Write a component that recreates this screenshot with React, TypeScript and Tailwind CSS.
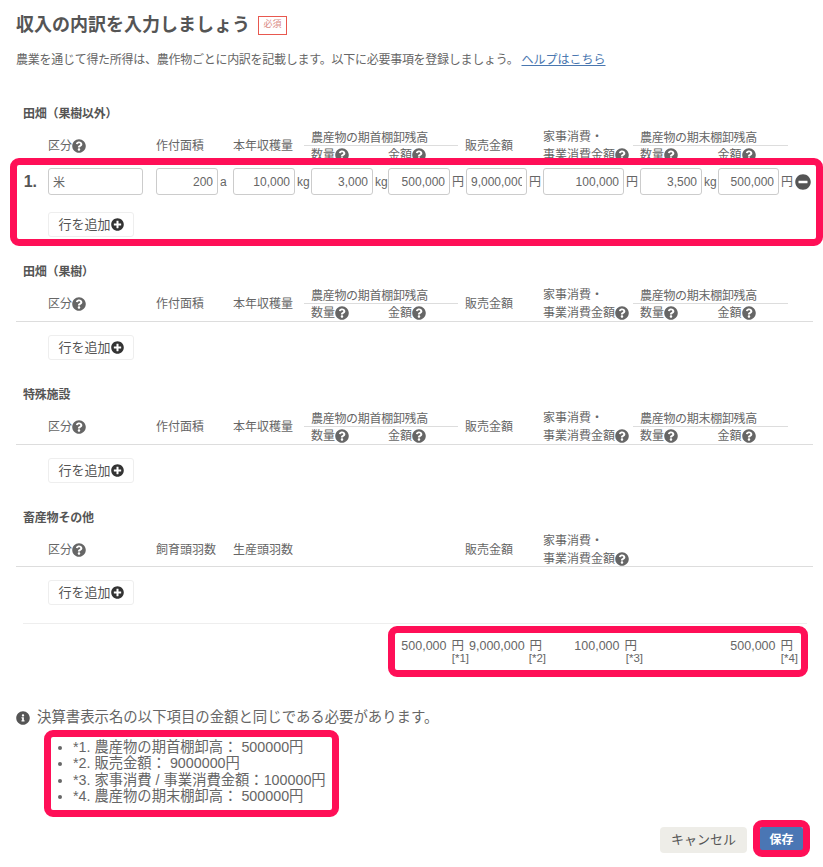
import { FaQuestionCircle, FaPlusCircle, FaMinusCircle, FaInfoCircle } from 'react-icons/fa'

const grid = 'grid grid-cols-[25px_108px_77px_78px_77px_77px_78px_97px_78px_77px_25px]'
const inputStyle = 'h-[27px] shrink-0 rounded-[3px] border border-[#ccc] bg-white px-[4px] text-[12px] text-[#666] outline-none'

function Help() {
  return <FaQuestionCircle className="inline-block shrink-0 text-[14px] text-[#666]" />
}

function Label({ text, help }: { text: string; help?: boolean }) {
  return (
    <span className="flex items-center whitespace-nowrap">
      {text}
      {help && <Help />}
    </span>
  )
}

function Cell({ col, children }: { col: string; children: React.ReactNode }) {
  return <div className={`${col} flex items-center pl-[7px]`}>{children}</div>
}

function Group({ title, col }: { title: string; col: string }) {
  return (
    <div className={`${col} row-span-2 flex flex-col`}>
      <div className="h-[17px] whitespace-nowrap border-b border-[#ddd] pl-[7px] leading-[19px] tracking-[-0.3px]">{title}</div>
      <div className="flex h-[18px]">
        <span className="flex w-1/2 items-center whitespace-nowrap pl-[7px]">数量<Help /></span>
        <span className="flex w-1/2 items-center whitespace-nowrap pl-[7px]">金額<Help /></span>
      </div>
    </div>
  )
}

function HouseHold() {
  return (
    <div className="col-start-8 row-span-2 row-start-1 flex flex-col justify-center pl-[7px] leading-[18px]">
      <div>家事消費・</div>
      <div className="flex items-center whitespace-nowrap">事業消費金額<Help /></div>
    </div>
  )
}

function CropHeader() {
  return (
    <div className={`${grid} mt-[7px] h-[35px] grid-rows-2 border-b border-[#ddd]`}>
      <Cell col="col-start-2 row-span-2 row-start-1"><Label text="区分" help /></Cell>
      <Cell col="col-start-3 row-span-2 row-start-1">作付面積</Cell>
      <Cell col="col-start-4 row-span-2 row-start-1">本年収穫量</Cell>
      <Group title="農産物の期首棚卸残高" col="col-span-2 col-start-5 row-start-1" />
      <Cell col="col-start-7 row-span-2 row-start-1">販売金額</Cell>
      <HouseHold />
      <Group title="農産物の期末棚卸残高" col="col-span-2 col-start-9 row-start-1" />
    </div>
  )
}

function LivestockHeader() {
  return (
    <div className={`${grid} mt-[7px] h-[34px] grid-rows-2 border-b border-[#ddd]`}>
      <Cell col="col-start-2 row-span-2 row-start-1"><Label text="区分" help /></Cell>
      <Cell col="col-start-3 row-span-2 row-start-1">飼育頭羽数</Cell>
      <Cell col="col-start-4 row-span-2 row-start-1">生産頭羽数</Cell>
      <Cell col="col-start-7 row-span-2 row-start-1">販売金額</Cell>
      <HouseHold />
    </div>
  )
}

function Heading({ children }: { children: React.ReactNode }) {
  return <h3 className="h-[16px] pl-[7px] text-[12px] font-bold leading-[16px] tracking-[-0.2px] text-[#555]">{children}</h3>
}

function AddRow() {
  return (
    <button className="ml-[32px] flex h-[25px] w-[86px] items-center justify-center rounded-[3px] border border-[#eee] bg-white text-[13px] text-[#555]">
      行を追加<FaPlusCircle className="text-[13px] text-[#333]" />
    </button>
  )
}

function Amount({ value, unit, width = 'w-[62px]' }: { value: string; unit: string; width?: string }) {
  return (
    <div className="flex items-center pl-[7px]">
      <input readOnly defaultValue={value} className={`${inputStyle} ${width} text-right`} />
      <span className="ml-[2px] text-[12px]">{unit}</span>
    </div>
  )
}

function Mark({ className }: { className: string }) {
  return <div className={`pointer-events-none absolute rounded-[9px] border-[7px] border-[#ff0f57] ${className}`} />
}

function Total({ width, value, note, pr }: { width: string; value: string; note: string; pr: string }) {
  return (
    <div className={`${width} text-right`}>
      <div className={`${pr} h-[13px] whitespace-nowrap text-[12.5px] leading-[14px]`}>
        {value}<span className="ml-[5px]">円</span>
      </div>
      <div className="text-[11.5px] leading-[12px]">{note}</div>
    </div>
  )
}

export default function App() {
  return (
    <div className="relative h-[867px] w-[823px] overflow-hidden bg-white font-['Liberation_Sans','Noto_Sans_CJK_JP',sans-serif] text-[12px] text-[#666]">
      <div className="px-[16px] pt-[15px]">
        <div className="flex h-[20px] items-center">
          <h2 className="text-[18px] font-bold leading-[20px] text-[#555]">収入の内訳を入力しましょう</h2>
          <span className="ml-[8px] flex h-[19px] w-[29px] items-center justify-center border border-[#e8584f] text-[9px] text-[#d98a85]">必須</span>
        </div>
        <p className="mt-[17px] h-[16px] leading-[16px]">
          <span className="tracking-[-0.27px]">農業を通じて得た所得は、農作物ごとに内訳を記載します。以下に必要事項を登録しましょう。</span>
          <a className="ml-[3px] text-[#4a77b0] underline">ヘルプはこちら</a>
        </p>

        <div className="mt-[38px] w-[797px]">
          <Heading>田畑（果樹以外）</Heading>
          <CropHeader />
          <div className={`${grid} h-[31px] items-end`}>
            <div className="pr-[4px] text-right text-[16px] font-bold leading-[27px] text-[#555]">1.</div>
            <div className="pl-[7px]">
              <input readOnly defaultValue="米" className={`${inputStyle} w-[95px]`} />
            </div>
            <Amount value="200" unit="a" />
            <Amount value="10,000" unit="kg" />
            <Amount value="3,000" unit="kg" />
            <Amount value="500,000" unit="円" />
            <div className="pl-[1px]">
              <Amount value="9,000,000" unit="円" width="w-[61px]" />
            </div>
            <Amount value="100,000" unit="円" width="w-[81px]" />
            <Amount value="3,500" unit="kg" />
            <Amount value="500,000" unit="円" width="w-[61px]" />
            <div className="flex h-[27px] items-center pl-[7px]">
              <FaMinusCircle className="text-[16px] text-[#555]" />
            </div>
          </div>
          <div className="mt-[17px]"><AddRow /></div>

          <div className="mt-[27px]"><Heading>田畑（果樹）</Heading></div>
          <CropHeader />
          <div className="mt-[13px]"><AddRow /></div>

          <div className="mt-[27px]"><Heading>特殊施設</Heading></div>
          <CropHeader />
          <div className="mt-[13px]"><AddRow /></div>

          <div className="mt-[27px]"><Heading>畜産物その他</Heading></div>
          <LivestockHeader />
          <div className="mt-[13px]"><AddRow /></div>
        </div>

        <div className="ml-[7px] mt-[18px] h-[1px] w-[784px] bg-[#eee]" />

        <div className="mt-[15px] flex pl-[380px]">
          <Total width="w-[73px]" value="500,000" note="[*1]" pr="pr-[5px]" />
          <Total width="w-[77px]" value="9,000,000" note="[*2]" pr="pr-[5px]" />
          <Total width="w-[97px]" value="100,000" note="[*3]" pr="pr-[6px]" />
          <Total width="w-[155px]" value="500,000" note="[*4]" pr="pr-[5px]" />
        </div>

        <div className="mt-[46px] flex h-[16px] items-center text-[14.4px]">
          <FaInfoCircle className="text-[14px] text-[#555]" />
          <span className="ml-[7px]">決算書表示名の以下項目の金額と同じである必要があります。</span>
        </div>
        <ul className="ml-[42px] mt-[13px] list-disc pl-[15px] text-[14.3px] leading-[16.3px] marker:text-[#666]">
          <li>*1. 農産物の期首棚卸高： 500000円</li>
          <li>*2. 販売金額： 9000000円</li>
          <li>*3. 家事消費 / 事業消費金額：100000円</li>
          <li>*4. 農産物の期末棚卸高： 500000円</li>
        </ul>

        <div className="mt-[23px] flex justify-end gap-[13px] pr-[4px]">
          <button className="h-[26px] w-[87px] rounded-[4px] bg-[#eeede8] text-[13px] text-[#555]">キャンセル</button>
          <button className="h-[25px] w-[43px] rounded-[2px] bg-[#4a76b4] text-[12px] font-bold text-white">保存</button>
        </div>
      </div>

      <Mark className="left-[10px] top-[158px] h-[88px] w-[813px]" />
      <Mark className="left-[388px] top-[626px] h-[51px] w-[420px]" />
      <Mark className="left-[44px] top-[730px] h-[87px] w-[295px]" />
      <Mark className="left-[753px] top-[820px] h-[37px] w-[57px]" />
    </div>
  )
}
